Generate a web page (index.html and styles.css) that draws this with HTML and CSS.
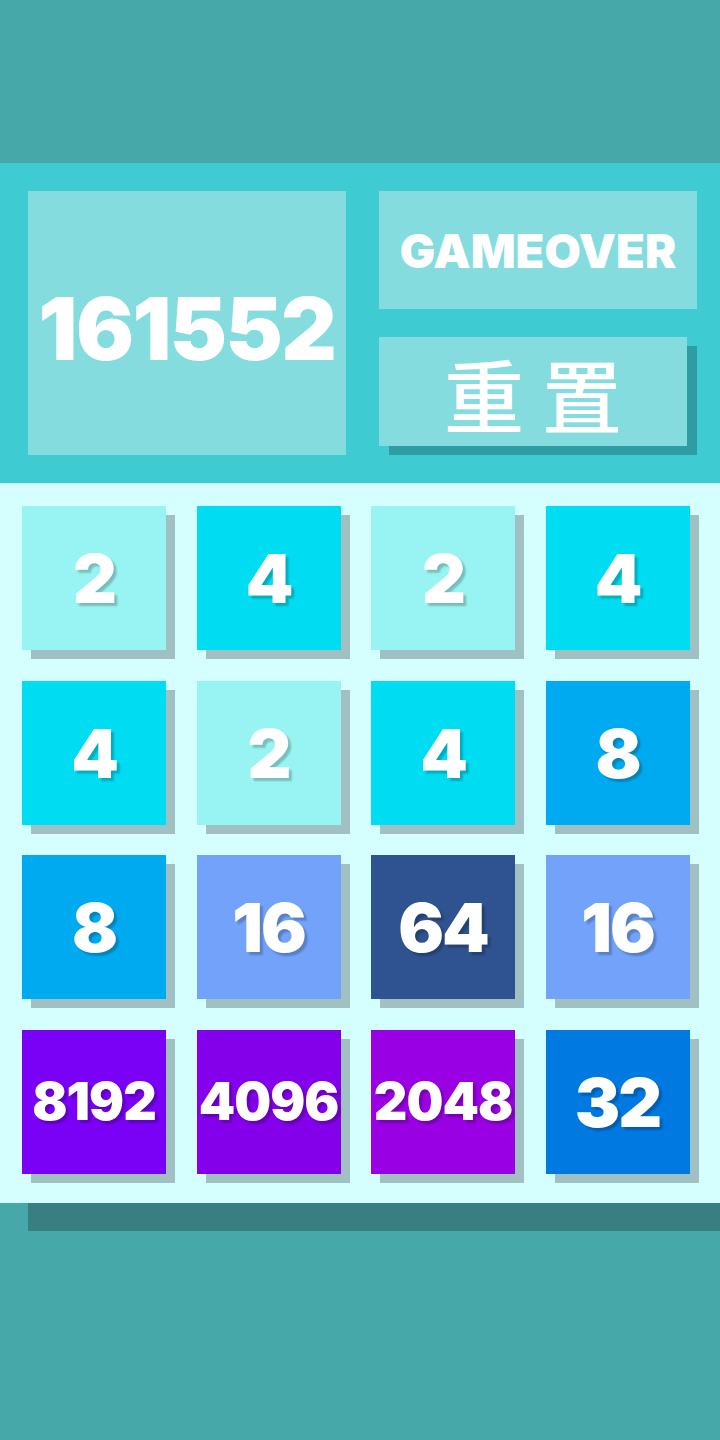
FILE: index.html
```html
<!DOCTYPE html>
<html lang="zh">
<head>
<meta charset="utf-8">
<title>2048</title>
<link rel="stylesheet" href="styles.css">
</head>
<body>
<div class="top-space"></div>
<header class="header">
  <div class="score">161552</div>
  <div class="side">
    <div class="status">GAMEOVER</div>
    <button class="reset">重置</button>
  </div>
</header>
<main class="board">
  <div class="tile t2">2</div>
  <div class="tile t4">4</div>
  <div class="tile t2">2</div>
  <div class="tile t4">4</div>

  <div class="tile t4">4</div>
  <div class="tile t2">2</div>
  <div class="tile t4">4</div>
  <div class="tile t8">8</div>

  <div class="tile t8">8</div>
  <div class="tile t16">16</div>
  <div class="tile t64">64</div>
  <div class="tile t16">16</div>

  <div class="tile t8192 long">8192</div>
  <div class="tile t4096 long">4096</div>
  <div class="tile t2048 long">2048</div>
  <div class="tile t32">32</div>
</main>
</body>
</html>
```
FILE: styles.css
```css
html, body {
  margin: 0;
  padding: 0;
}
body {
  width: 720px;
  height: 1440px;
  overflow: hidden;
  background: #46a8a8;
  font-family: "Inter", "Liberation Sans", sans-serif;
  color: #ffffff;
}
.top-space {
  height: 163px;
}
.header {
  height: 320px;
  box-sizing: border-box;
  padding: 28px 23px 28px 28px;
  background: #3ecbd2;
  display: flex;
  gap: 33px;
}
.score {
  width: 318px;
  height: 264px;
  background: #84dcde;
  display: flex;
  align-items: center;
  justify-content: center;
  font-weight: 900;
  font-size: 86px;
  letter-spacing: -1.5px;
  padding-top: 12px;
  box-sizing: border-box;
}
.side {
  width: 318px;
  display: flex;
  flex-direction: column;
  gap: 28px;
}
.status {
  height: 118px;
  background: #84dcde;
  display: flex;
  align-items: center;
  justify-content: center;
  font-weight: 900;
  font-size: 47px;
  letter-spacing: 0;
}
.reset {
  width: 308px;
  height: 109px;
  border: 0;
  padding: 0 0 0 18px;
  margin: 0;
  background: #84dcde;
  box-shadow: 10px 9px 0 #2e9ca2;
  color: #ffffff;
  font-family: "Noto Sans CJK SC", "Noto Sans CJK JP", sans-serif;
  font-weight: 500;
  font-size: 80px;
  letter-spacing: 18px;
  line-height: 1;
  display: flex;
  align-items: center;
  justify-content: center;
}
.board {
  height: 720px;
  box-sizing: border-box;
  background: #d5fefe;
  box-shadow: 28px 28px 0 #377f80;
  padding: 23px 30px 0 22px;
  display: grid;
  grid-template-columns: repeat(4, 144px);
  grid-template-rows: repeat(4, 144px);
  column-gap: 30.5px;
  row-gap: 30.5px;
  position: relative;
}
.tile {
  width: 144px;
  height: 144px;
  box-shadow: 9px 9px 0 #a1c0c1;
  display: flex;
  align-items: center;
  justify-content: center;
  font-weight: 900;
  font-size: 68px;
  letter-spacing: -2px;
  text-shadow: 3px 3px 2px rgba(0, 0, 0, 0.22);
}
.tile.long {
  font-size: 52px;
  letter-spacing: -1px;
}
.t2 { background: #98f4f2; }
.t4 { background: #00dcf2; }
.t8 { background: #00aaf0; }
.t16 { background: #72a2fa; }
.t32 { background: #0079e0; }
.t64 { background: #2f5290; }
.t2048 { background: #9a00e4; }
.t4096 { background: #8400ea; }
.t8192 { background: #7a00f6; }
```
